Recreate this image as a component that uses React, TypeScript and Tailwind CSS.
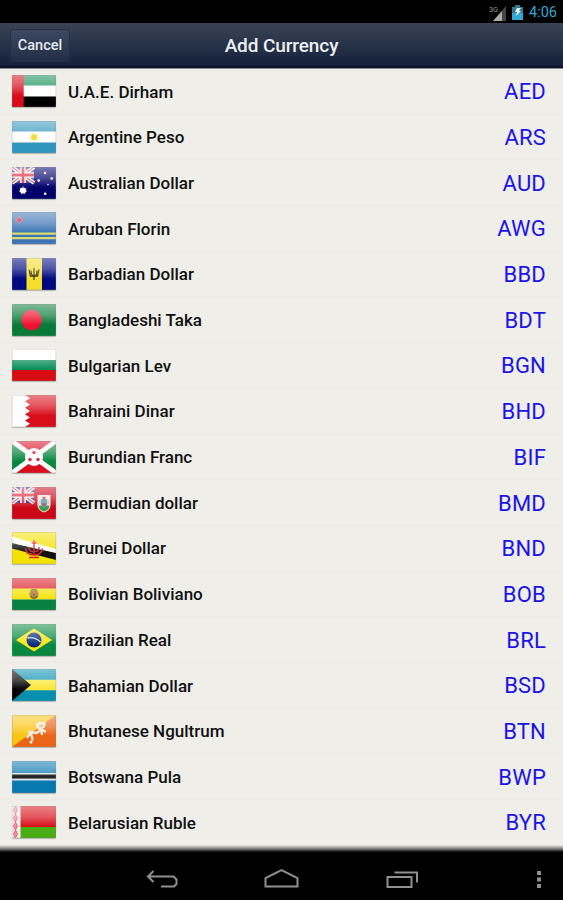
import type { ReactNode } from "react";

type Currency = {
    name: string
    code: string
    flag: ReactNode
}

// every flag is drawn in a 44 x 32 box
const UnionJack = ({ ground }: { ground: string }) => {
    return (
        <g>
            <rect width="22" height="16" fill={ground}/>
            <path d="M0 0L22 16M22 0L0 16" stroke="#fff" strokeWidth="4"/>
            <path d="M0 0L22 16M22 0L0 16" stroke="#e2465a" strokeWidth="1.2"/>
            <path d="M11 0V16M0 8H22" stroke="#fff" strokeWidth="5.6"/>
            <path d="M11 0V16M0 8H22" stroke="#dc2840" strokeWidth="2.8"/>
        </g>
    )
}

const currencies: Currency[] = [
    {
        name: "U.A.E. Dirham", code: "AED", flag: <>
            <rect width="44" height="11" fill="#138f55"/>
            <rect y="10.5" width="44" height="11" fill="#fff"/>
            <rect y="21.5" width="44" height="10.5" fill="#000"/>
            <rect width="11.7" height="32" fill="#d90b16"/>
        </>
    },
    {
        name: "Argentine Peso", code: "ARS", flag: <>
            <rect width="44" height="32" fill="#3195bd"/>
            <rect y="10.5" width="44" height="11" fill="#fff"/>
            <circle cx="22" cy="16" r="3.3" fill="#f0d91d"/>
        </>
    },
    {
        name: "Australian Dollar", code: "AUD", flag: <>
            <rect width="44" height="32" fill="#00006b"/>
            <UnionJack ground="#2b3487"/>
            <circle cx="11" cy="23.5" r="3.1" fill="#fff"/>
            <circle cx="11" cy="23.5" r="3.6" fill="none" stroke="#fff" strokeOpacity=".6" strokeDasharray="1.4 1.8"/>
            <g fill="#fff">
                <circle cx="33" cy="6" r="1.2"/>
                <circle cx="26.7" cy="13.5" r="1.3"/>
                <circle cx="39.7" cy="11.5" r="1.3"/>
                <circle cx="36" cy="17.5" r=".8"/>
                <circle cx="33.2" cy="26.7" r="1.3"/>
            </g>
        </>
    },
    {
        name: "Aruban Florin", code: "AWG", flag: <>
            <rect width="44" height="32" fill="#3c74b5"/>
            <path d="M0 21.7H44M0 26.2H44" stroke="#d9d96f" strokeWidth="2.2"/>
            <path d="M7.3 4l1.3 2.6 2.7 1.3-2.7 1.3-1.3 2.6-1.3-2.6-2.7-1.3 2.7-1.3z" fill="#e3102c" stroke="#e8a6b8" strokeWidth=".4"/>
        </>
    },
    {
        name: "Barbadian Dollar", code: "BBD", flag: <>
            <rect width="44" height="32" fill="#000a80"/>
            <rect x="14.5" width="15.5" height="32" fill="#f5de2c"/>
            <path d="M22 10V22M16.7 11.5c1.5 2 1 5.5 1.7 6.7H25.6c.7-1.2.2-4.7 1.7-6.7M19 12.5c-.2 3 .7 5 3 5.7 2.3-.7 3.2-2.7 3-5.7" fill="none" stroke="#302a0c" strokeWidth="1.2"/>
        </>
    },
    {
        name: "Bangladeshi Taka", code: "BDT", flag: <>
            <rect width="44" height="32" fill="#087a38"/>
            <circle cx="19.6" cy="16" r="10.3" fill="#ed1330"/>
        </>
    },
    {
        name: "Bulgarian Lev", code: "BGN", flag: <>
            <rect width="44" height="11" fill="#fff"/>
            <rect y="11" width="44" height="10.5" fill="#078d57"/>
            <rect y="21" width="44" height="11" fill="#d70b12"/>
        </>
    },
    {
        name: "Bahraini Dinar", code: "BHD", flag: <>
            <rect width="44" height="32" fill="#fff"/>
            <path d="M44 0H13l5 3.2-5 3.2 5 3.2-5 3.2 5 3.2-5 3.2 5 3.2-5 3.2 5 3.2-5 3.2H44z" fill="#d90d19"/>
        </>
    },
    {
        name: "Burundian Franc", code: "BIF", flag: <>
            <rect width="44" height="32" fill="#06863e"/>
            <path d="M0 0H44L22 16zM0 32H44L22 16z" fill="#d90f20"/>
            <path d="M0 0L44 32M44 0L0 32" stroke="#fff" strokeWidth="4.8"/>
            <circle cx="22" cy="16" r="9" fill="#fff"/>
            <g fill="#dc1a2b">
                <circle cx="22" cy="11.5" r="1.7"/>
                <circle cx="18" cy="18.5" r="1.7"/>
                <circle cx="26" cy="18.5" r="1.7"/>
            </g>
        </>
    },
    {
        name: "Bermudian dollar", code: "BMD", flag: <>
            <rect width="44" height="32" fill="#cc0718"/>
            <UnionJack ground="#1a2a8c"/>
            <path d="M25.5 8H38.5V18c0 4-3 6.500-6.500 7.500-3.500-1-6.500-3.500-6.500-7.500z" fill="#f0ebe2"/>
            <path d="M26.500 18.500h11c-.5 3.500-2.500 5-5.500 6-3-1-5-2.500-5.500-6z" fill="#3c9c43"/>
            <path d="M29 12h6v6l-3 3.500-3-3.500z" fill="#5b9db8"/>
            <path d="M30.500 11h3M30.500 17.500h3" stroke="#cf3a44" strokeWidth="2.600"/>
            <path d="M28 13v4M36 13v4" stroke="#b9b184"/>
        </>
    },
    {
        name: "Brunei Dollar", code: "BND", flag: <>
            <rect width="44" height="32" fill="#f5e100"/>
            <path d="M0 4.500L44 17V22.500L0 11z" fill="#fff"/>
            <path d="M0 11L44 20.500V28L0 16.500z" fill="#111"/>
            <path d="M0 11L44 21V17z" fill="#fff"/>
            <path d="M22 8v15M19.500 11h5M13.500 16.500c.8 4.500 3.500 6.500 8.500 6.500s7.700-2 8.500-6.500M17 15c.2 3.500 2 5 5 5s4.800-1.500 5-5M17 25.500h10" fill="none" stroke="#d9222c" strokeWidth="1.500"/>
        </>
    },
    {
        name: "Bolivian Boliviano", code: "BOB", flag: <>
            <rect width="44" height="11" fill="#da1723"/>
            <rect y="10.5" width="44" height="11" fill="#f6e411"/>
            <rect y="21.5" width="44" height="10.5" fill="#078040"/>
            <ellipse cx="22" cy="16" rx="4.7" ry="4.8" fill="#a78730"/>
            <path d="M19 13c1-2 5-2 6 0M18.5 18c2 3 5 3 7 0" fill="none" stroke="#74562b" strokeWidth="1.2"/>
            <circle cx="22" cy="16" r="2" fill="#d7613c"/>
            <circle cx="22" cy="17" r="1" fill="#41794a"/>
        </>
    },
    {
        name: "Brazilian Real", code: "BRL", flag: <>
            <rect width="44" height="32" fill="#08893f"/>
            <path d="M4 16L22 4.5 40 16 22 27.5z" fill="#f9e414"/>
            <circle cx="22" cy="16" r="7.5" fill="#0a2d80"/>
            <path d="M15.500 14c5-1 9 .5 13 4" fill="none" stroke="#d5dfeb" strokeWidth="1.3"/>
        </>
    },
    {
        name: "Bahamian Dollar", code: "BSD", flag: <>
            <rect width="44" height="32" fill="#078fb0"/>
            <rect y="10.7" width="44" height="10.6" fill="#fae638"/>
            <path d="M0 0L19 16 0 32z" fill="#000"/>
        </>
    },
    {
        name: "Bhutanese Ngultrum", code: "BTN", flag: <>
            <rect width="44" height="32" fill="#f9c513"/>
            <path d="M44 0V32H0z" fill="#ea6517"/>
            <path d="M15.500 22l4-5 5 1 4.500-3-4-3.500 2.500-3.500 5 .5-.5 3-4 1.500 5 3.500M19.500 18l-2.500-1.500M19.500 20l1 4.500M28 9l-3 0M29 15l1 4" fill="none" stroke="#f4e9da" strokeWidth="2.400" strokeLinejoin="round" strokeLinecap="round"/>
            <circle cx="19" cy="27" r="1.500" fill="#fff"/>
        </>
    },
    {
        name: "Botswana Pula", code: "BWP", flag: <>
            <rect width="44" height="32" fill="#0878b0"/>
            <rect y="12" width="44" height="7.5" fill="#d7dfe2"/>
            <rect y="13.5" width="44" height="4" fill="#000"/>
        </>
    },
    {
        name: "Belarusian Ruble", code: "BYR", flag: <>
            <rect width="44" height="21.5" fill="#d80e18"/>
            <rect y="21" width="44" height="11" fill="#48ac12"/>
            <rect width="8.5" height="32" fill="#fbeeee"/>
            <path d="M3.500 0l2 4-2 4-2-4zM3.500 8l2 4-2 4-2-4zM3.500 16l2 4-2 4-2-4zM3.500 24l2 4-2 4-2-4z" fill="#e3465a" fillOpacity=".5" stroke="#e3465a" strokeWidth=".8"/>
        </>
    },
]

const Flag = ({ children }: { children: ReactNode }) => {
    return (
        <svg viewBox="0 0 44 32" className="h-8 w-11 shrink-0 rounded-[1px] shadow-[0_1px_1px_#00000040]">
            {children}
            <rect width="44" height="32" fill="url(#gloss)"/>
            <rect x=".5" y=".5" width="43" height="31" fill="none" stroke="#888" strokeOpacity=".2"/>
        </svg>
    )
}

const CurrencyRow = ({ name, code, flag }: Currency) => {
    return (
        <div className="flex h-[45.7px] shrink-0 items-center border-b border-[#ebeae5] pr-[17px] pl-3">
            <Flag>{flag}</Flag>
            <span className="ml-3 flex-1 pt-[2px] text-[17px] font-medium text-[#111]">{name}</span>
            <span className="pt-[1px] text-[22px] tracking-[.2px] text-[#1a14e6]">{code}</span>
        </div>
    )
}

const StatusBar = () => {
    return (
        <div className="flex h-[23px] shrink-0 items-center justify-end bg-black pr-[6px]">
            <svg viewBox="0 0 18 18" className="mt-[2px] mr-[5px] h-[18px] w-[18px]">
                <text x="0" y="7.5" fontSize="8" textLength="9" lengthAdjust="spacingAndGlyphs" fill="#999">3G</text>
                <path d="M17 2V17H4z" fill="#444"/>
                <path d="M13 7V17H4z" fill="#aaa"/>
            </svg>
            <svg viewBox="0 0 11 16" className="mt-[1px] mr-[6px] h-[16px] w-[11px]">
                <path d="M3 1h5v2h3v13H0V3h3z" fill="#35788d"/>
                <path d="M0 9h11v7H0z" fill="#32a9d3"/>
                <path d="M5 4h4L7 7h2l-5 5 1-4H3z" fill="#e5f3f6"/>
            </svg>
            <span className="mt-[3px] text-[14.5px] text-[#32a8d2]">4:06</span>
        </div>
    )
}

const NavBar = () => {
    return (
        <div className="h-12 shrink-0 bg-black">
            <svg viewBox="0 0 563 48" className="h-12 w-full" fill="none" stroke="#909090" strokeWidth="2">
                <path d="M153.5 19L148 24.5L153.5 30M148 24.500H173.5L176.5 27.5V32L174 34.5H161"/>
                <path d="M265.5 34.5V26L281.5 18L297.5 26V34.5z"/>
                <path d="M387.5 25H411.5V35H387.5zM394.5 20.500H417V30.5"/>
                <path d="M537 21H541M537 27.5H541M537 34H541" strokeWidth="4"/>
            </svg>
        </div>
    )
}

const App = () => {
    return (
        <div className="flex h-[900px] w-[563px] flex-col overflow-hidden bg-black font-[Roboto,sans-serif]">
            <svg className="absolute size-0">
                <linearGradient id="gloss" x1="0" y1="0" x2="0" y2="1">
                    <stop offset="0" stopColor="#fff" stopOpacity=".48"/>
                    <stop offset=".34" stopColor="#fff" stopOpacity=".3"/>
                    <stop offset=".65" stopColor="#fff" stopOpacity="0"/>
                </linearGradient>
            </svg>
            <StatusBar/>
            <div className="grid h-[45px] shrink-0 grid-cols-[1fr_auto_1fr] items-center border-b-2 border-[#0b1030] bg-linear-to-b from-[#3b4456] via-[#263348] to-[#152039] px-[10px] pt-[2px]">
                <button className="flex h-[33px] w-[60px] items-center justify-center rounded-[3px] border border-[#252f43] bg-linear-to-b from-[#3b485f] to-[#222e46] pt-[1px] text-[14.5px] font-medium text-[#e5e8ee]">Cancel</button>
                <h1 className="pt-[2px] text-[19px] font-medium tracking-[-.1px] text-[#eceef2]">Add Currency</h1>
            </div>
            <div className="flex h-[784px] shrink-0 flex-col overflow-hidden border-t border-[#8d8d8a] bg-[#efeee9]">
                {currencies.map((currency)=><CurrencyRow key={currency.code} {...currency}/>)}
                {/* list fades out above the navigation buttons */}
                <div className="-mt-[1px] h-[8px] shrink-0 bg-linear-to-b from-[#efeee900] via-[#777873] to-black"/>
            </div>
            <NavBar/>
        </div>
    )
}

export default App;
